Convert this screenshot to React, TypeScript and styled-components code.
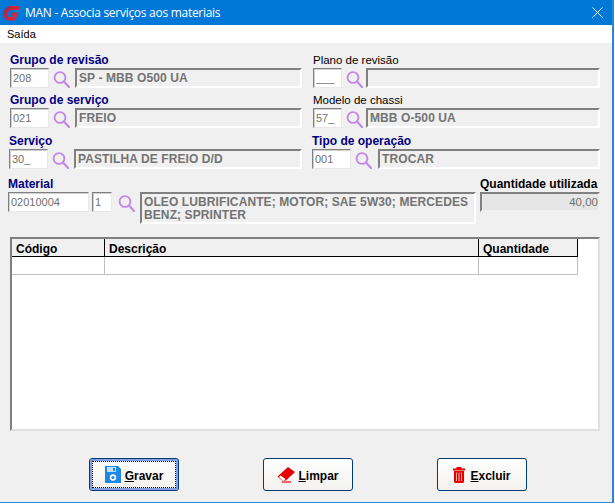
import styled, { createGlobalStyle } from "styled-components";
import type { ReactNode } from "react";

const GlobalStyle = createGlobalStyle`
  html, body { margin: 0; padding: 0; background: #ffffff; }
  * { box-sizing: border-box; }
`;

function Lupa(props: { ml?: number }) {
  return (
    <LupaSvg viewBox="0 0 17 18" $ml={props.ml} aria-hidden="true">
      <circle cx="7" cy="7.500" r="5.400" fill="none" stroke="#c488ea" strokeWidth="1.900" />
      <path d="M11 11.500l5 5.500" stroke="#c488ea" strokeWidth="2.200" strokeLinecap="round" />
    </LupaSvg>
  );
}

function Logo() {
  return (
    <svg width="18" height="18" viewBox="0 0 18 18" aria-hidden="true">
      <defs>
        <linearGradient id="logoG" x1="0" y1="0" x2="1" y2="0.6">
          <stop offset="0" stopColor="#8e2a52" />
          <stop offset="0.45" stopColor="#c9243f" />
          <stop offset="1" stopColor="#d8283c" />
        </linearGradient>
      </defs>
      <path
        d="M17 2H8C3.500 2 .5 6 .5 10 .5 14 3 16.500 6.500 16.500H12.500L15 8.500H8.500L7.500 11.500H10.800L10.200 13H7C5 13 4.200 11.500 4.600 9.800 5.100 7.500 6.800 6 9 6H15.800z"
        fill="url(#logoG)"
      />
    </svg>
  );
}

function Field(props: {
  label: string;
  bold?: boolean;
  code: string;
  text: string;
  codeW: number;
  gap: number;
  descW: number;
  shift?: number;
  top?: number;
}) {
  return (
    <FieldBox $shift={props.shift ?? 0} $top={props.top ?? 0}>
      <Label $bold={props.bold}>{props.label}</Label>
      <FieldRow>
        <Input $w={props.codeW}>{props.code}</Input>
        <Lupa />
        <Desc $w={props.descW} $gap={props.gap}>{props.text}</Desc>
      </FieldRow>
    </FieldBox>
  );
}

function Btn(props: { icon: ReactNode; letter: string; rest: string; focus?: boolean; gap: number }) {
  return (
    <Button type="button" $focus={props.focus} $gap={props.gap}>
      {props.focus && <FocusRing />}
      {props.icon}
      <ButtonText>
        <u>{props.letter}</u>
        {props.rest}
      </ButtonText>
    </Button>
  );
}

export default function App() {
  return (
    <Win>
      <GlobalStyle />
      <TitleBar>
        <TitleLeft>
          <Logo />
          <span>MAN - Associa serviços aos materiais</span>
        </TitleLeft>
        <svg width="11" height="11" viewBox="0 0 11 11" aria-hidden="true">
          <path d="M.5.5l10 10M10.500.5l-10 10" stroke="#fff" strokeWidth="1" />
        </svg>
      </TitleBar>
      <MenuBar>Saída</MenuBar>
      <Body>
        <FormGrid>
          <Field label="Grupo de revisão" bold code="208" text="SP - MBB O500 UA" codeW={39} gap={5} descW={227} />
          <Field label="Plano de revisão" code="___" text="" codeW={29} gap={3} descW={234} />
          <Field label="Grupo de serviço" bold code="021" text="FREIO" codeW={39} gap={5} descW={227} />
          <Field label="Modelo de chassi" code="57_" text="MBB O-500 UA" codeW={29} gap={3} descW={234} />
          <Field label="Serviço" bold code="30_" text="PASTILHA DE FREIO D/D" codeW={39} gap={5} descW={228} shift={-1} top={1} />
          <Field label="Tipo de operação" bold code="001" text="TROCAR" codeW={39} gap={6} descW={222} shift={-1} top={1} />
        </FormGrid>

        <MaterialRow>
          <div>
            <Label $bold>Material</Label>
            <FieldRow>
              <Input $w={81}>02010004</Input>
              <Input $w={20} $ml={3}>1</Input>
              <Lupa ml={6} />
              <Desc $w={336} $gap={5} $h={32}>
                OLEO LUBRIFICANTE; MOTOR; SAE 5W30; MERCEDES BENZ; SPRINTER
              </Desc>
            </FieldRow>
          </div>
          <div>
            <QtyLabel>Quantidade utilizada</QtyLabel>
            <QtyBox>40,00</QtyBox>
          </div>
        </MaterialRow>

        <GridBox>
          <GridHead>
            <HeadCell $w={93}>Código</HeadCell>
            <HeadCell $w={374}>Descrição</HeadCell>
            <HeadCell $w={99}>Quantidade</HeadCell>
          </GridHead>
          <GridRow>
            <RowCell $w={93} />
            <RowCell $w={374} />
            <RowCell $w={99} />
          </GridRow>
        </GridBox>

        <Buttons>
          <Btn
            focus
            gap={4}
            letter="G"
            rest="ravar"
            icon={
              <svg width="16" height="17" viewBox="0 0 16 17" aria-hidden="true">
                <path d="M0 0h13l3 3v14H0z" fill="#1e88e8" />
                <path d="M2 1h9v5H2z" fill="#bfe0fa" />
                <path d="M8 2h2v3H8z" fill="#1e88e8" />
                <circle cx="8" cy="11.500" r="2.400" fill="none" stroke="#fff" strokeWidth="1.600" />
              </svg>
            }
          />
          <Btn
            gap={3}
            letter="L"
            rest="impar"
            icon={
              <svg width="18" height="18" viewBox="0 0 18 18" aria-hidden="true">
                <path d="M11 1l7 5-9 8.500H5L.5 10.500z" fill="#e60000" />
                <path d="M3.500 9.500l5 3.500-1.500 1.500H5.500L2 11z" fill="#fff" />
                <path d="M5 16h9" stroke="#e60000" strokeWidth="1.200" />
              </svg>
            }
          />
          <Btn
            gap={5}
            letter="E"
            rest="xcluir"
            icon={
              <svg width="12" height="16" viewBox="0 0 12 16" aria-hidden="true">
                <path d="M3.500 0h5v1.500H12V3.500H0V1.500h3.500zM1 4h10v11l-1 1H2l-1-1z" fill="#e60000" />
                <path d="M3.500 5.500v8.500M6 5.500v8.500M8.500 5.500v8.500" stroke="#f7b0b0" strokeWidth="1" />
              </svg>
            }
          />
        </Buttons>
      </Body>
    </Win>
  );
}

const Win = styled.div`
  width: 614px;
  height: 503px;
  display: flex;
  flex-direction: column;
  background: #f0f0f0;
  border-right: 2px solid #2b88d8;
  border-bottom: 1px solid #2b88d8;
  font-family: "Liberation Sans", Arial, sans-serif;
  overflow: hidden;
`;

const TitleBar = styled.div`
  height: 25px;
  flex: none;
  background: #0078d7;
  color: #ffffff;
  font-size: 12px;
  display: flex;
  align-items: center;
  justify-content: space-between;
  padding: 0 9px 0 3px;
`;

const TitleLeft = styled.div`
  display: flex;
  align-items: center;
  gap: 4px;
  font-family: "Open Sans", sans-serif;
  letter-spacing: -0.28px;
`;

const MenuBar = styled.div`
  height: 18px;
  flex: none;
  background: #ffffff;
  color: #000000;
  font-size: 11px;
  line-height: 18px;
  padding-left: 7px;
`;

const Body = styled.div`
  flex: 1;
  display: flex;
  flex-direction: column;
  padding: 10px 0 0 10px;
`;

const FormGrid = styled.div`
  display: grid;
  grid-template-columns: 303px 1fr;
  row-gap: 5px;
`;

const FieldBox = styled.div<{ $shift: number; $top: number }>`
  margin-left: ${({ $shift }) => $shift}px;
  margin-top: ${({ $top }) => $top}px;
`;

const Label = styled.div<{ $bold?: boolean }>`
  height: 15px;
  font-size: ${({ $bold }) => ($bold ? 12 : 11.5)}px;
  line-height: 14px;
  font-weight: ${({ $bold }) => ($bold ? 700 : 400)};
  color: ${({ $bold }) => ($bold ? "#00007f" : "#000000")};
  white-space: nowrap;
`;

const QtyLabel = styled(Label)`
  font-size: 12px;
  font-weight: 700;
  color: #000000;
`;

const FieldRow = styled.div`
  display: flex;
  align-items: flex-start;
`;

const Input = styled.div<{ $w: number; $ml?: number }>`
  width: ${({ $w }) => $w}px;
  height: 20px;
  margin-left: ${({ $ml }) => $ml ?? 0}px;
  background: #ffffff;
  border: 1px solid;
  border-color: #808080 #e8e8e8 #e8e8e8 #808080;
  box-shadow: inset 1px 1px 0 #d0d0d0;
  color: #707070;
  font-size: 11px;
  line-height: 18px;
  padding-left: 2px;
  white-space: nowrap;
`;

const LupaSvg = styled.svg<{ $ml?: number }>`
  width: 17px;
  height: 18px;
  flex: none;
  margin: 2px 0 0 ${({ $ml }) => $ml ?? 4}px;
`;

const Desc = styled.div<{ $w: number; $gap: number; $h?: number }>`
  width: ${({ $w }) => $w}px;
  height: ${({ $h }) => $h ?? 20}px;
  margin-left: ${({ $gap }) => $gap}px;
  background: #f0f0f0;
  border: 2px solid;
  border-color: #808080 #ffffff #ffffff #808080;
  color: #737373;
  font-size: 12px;
  font-weight: 700;
  line-height: 13px;
  letter-spacing: 0.1px;
  padding: 2px 2px 0;
`;

const MaterialRow = styled.div`
  display: flex;
  justify-content: space-between;
  width: 592px;
  margin: 8px 0 0 -2px;
`;

const QtyBox = styled.div`
  width: 120px;
  height: 20px;
  background: #e6e6e6;
  border: 2px solid;
  border-color: #808080 #f0f0f0 #f0f0f0 #808080;
  color: #707070;
  font-size: 11.5px;
  line-height: 16px;
  text-align: right;
`;

const GridBox = styled.div`
  width: 590px;
  height: 194px;
  margin-top: 13px;
  background: #ffffff;
  border: 2px solid;
  border-color: #808080 #e0e0e0 #e0e0e0 #808080;
`;

const GridHead = styled.div`
  display: flex;
  height: 18px;
`;

const HeadCell = styled.div<{ $w: number }>`
  width: ${({ $w }) => $w}px;
  background: #f0f0f0;
  border-right: 1px solid #000000;
  border-bottom: 1px solid #000000;
  font-size: 12px;
  font-weight: 700;
  line-height: 14px;
  padding: 3px 0 0 4px;
`;

const GridRow = styled.div`
  display: flex;
  height: 18px;
`;

const RowCell = styled.div<{ $w: number }>`
  width: ${({ $w }) => $w}px;
  border-right: 1px solid #c0c0c0;
  border-bottom: 1px solid #c0c0c0;
`;

const Buttons = styled.div`
  display: flex;
  margin: 27px 0 0 79px;
  gap: 84px;
`;

const Button = styled.button<{ $focus?: boolean; $gap: number }>`
  position: relative;
  width: 90px;
  height: 33px;
  display: flex;
  align-items: center;
  justify-content: center;
  gap: ${({ $gap }) => $gap}px;
  padding: 0;
  background: linear-gradient(#ffffff, #f4f2ef);
  border: 1px solid #003c74;
  border-radius: 3px;
  box-shadow: ${({ $focus }) => ($focus ? "inset 0 0 0 2px #7f9fe8" : "none")};
  color: #000000;
  font-family: "Liberation Sans", Arial, sans-serif;
  font-size: 12px;
  font-weight: 700;
`;

const ButtonText = styled.span`
  margin-top: 2px;
`;

const FocusRing = styled.i`
  position: absolute;
  inset: 2px;
  border: 1px dotted #000000;
`;
